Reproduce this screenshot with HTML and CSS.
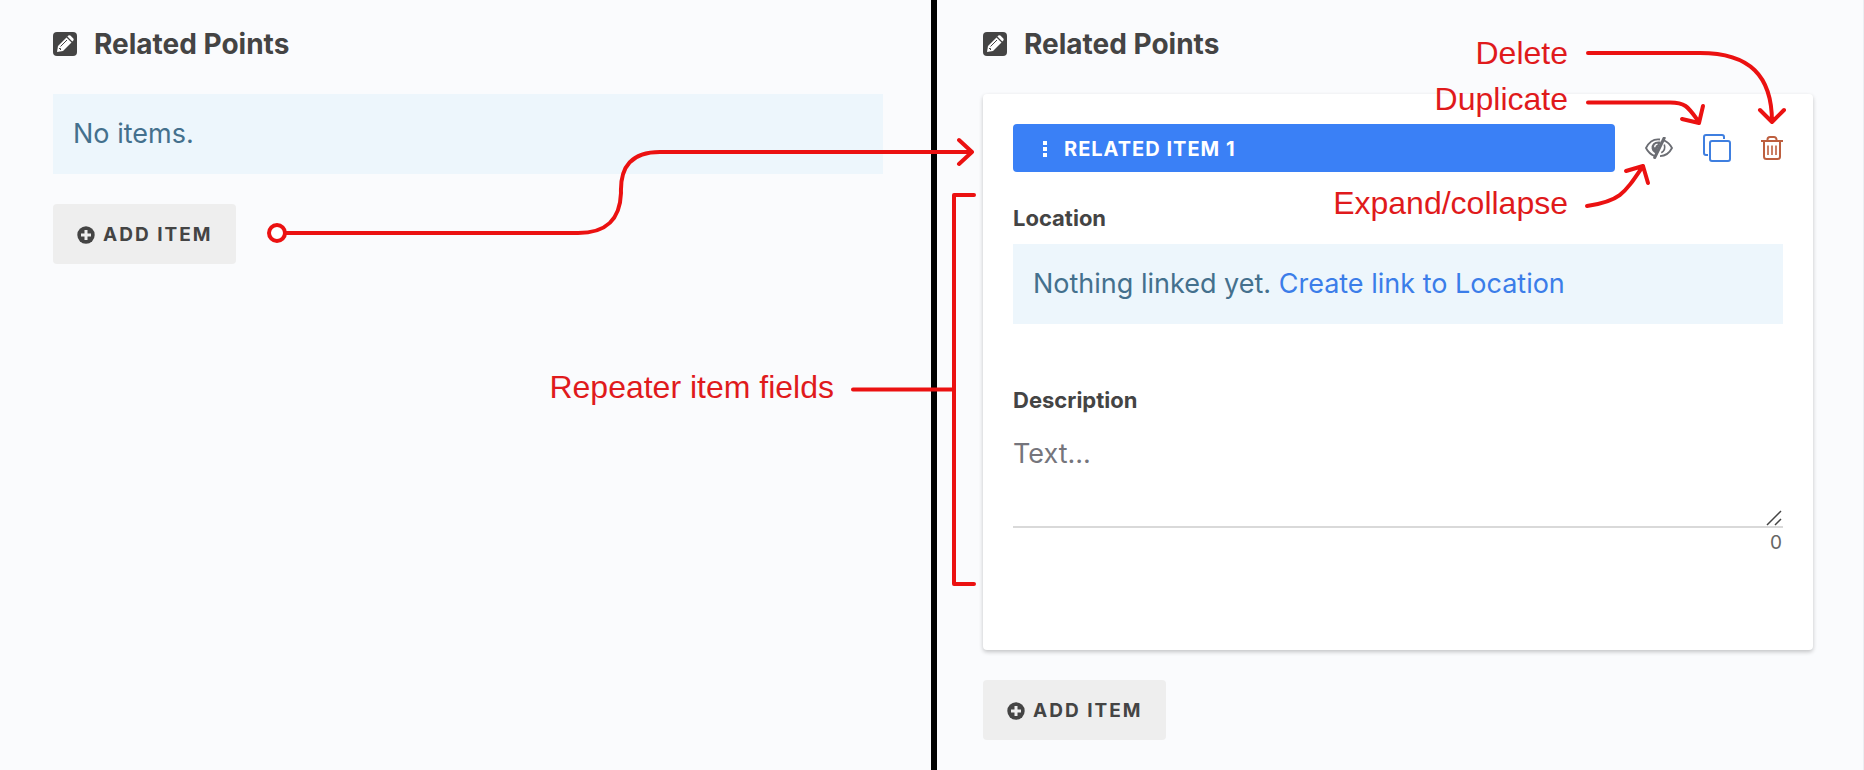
FILE: index.html
```
<!DOCTYPE html>
<html lang="en">
<head>
<meta charset="utf-8">
<title>Related Points</title>
<link rel="stylesheet" href="styles.css">
</head>
<body>
<svg class="symbols" aria-hidden="true">
  <symbol id="pencil" viewBox="0 0 24 24">
    <rect width="24" height="24" rx="4" fill="#444"/>
    <path d="M4 20l1-6 8.500-8.500 5 5L10 19z" fill="#fff"/>
    <path d="M14.400 4.600l1-1a1.500 1.500 0 0 1 2 0l2.900 2.900a1.500 1.500 0 0 1 0 2l-1 1z" fill="#fff"/>
    <path d="M7.500 14.500l6.500-6.500M6 16.500h1.500V18" fill="none" stroke="#444" stroke-width="1"/>
  </symbol>
  <symbol id="plus" viewBox="0 0 18 18">
    <circle cx="9" cy="9" r="8.700" fill="#444"/>
    <path d="M9 4v10M4 9h10" stroke="#eee" stroke-width="3"/>
  </symbol>
</svg>
<main class="compare">
  <section class="pane pane-before">
    <h2 class="heading"><svg class="heading-icon"><use href="#pencil"/></svg>Related Points</h2>
    <p class="notice">No items.</p>
    <button class="add" type="button"><svg class="add-icon"><use href="#plus"/></svg>ADD ITEM</button>
  </section>
  <section class="pane pane-after">
    <h2 class="heading"><svg class="heading-icon"><use href="#pencil"/></svg>Related Points</h2>
    <div class="card">
      <div class="item-bar">
        <button class="item-title" type="button">
          <svg class="grip" viewBox="0 0 6 18"><path d="M1 1h4v4H1zM1 7h4v4H1zM1 13h4v4H1z" fill="#fff"/></svg>RELATED ITEM 1
        </button>
        <div class="tools">
          <button class="tool" type="button" aria-label="Expand or collapse">
            <svg width="28" height="22" viewBox="0 0 28 22" fill="none" stroke="#6b6d73" stroke-width="1.800">
              <path d="M15 2.500C8 1.500 3.500 6 1 11c2 4 5 6.500 8.500 8"/>
              <path d="M19 3.300c3.500 1.500 6.200 4.200 8 7.700-2.800 5.500-7 8-12 8.200"/>
              <path d="M14.500 5.500C9 5 7 8.500 7.500 11.500c.3 1.800 1.300 3 2.700 3.800z" fill="#6b6d73"/>
              <path d="M12.500 7.200c-2 .3-2.800 1.500-2.800 3.100" stroke="#fff" stroke-width="1.300"/>
              <path d="M19.300 7.500c1.200 4-.3 6.700-3 8.200" stroke-width="1.600"/>
              <path d="M19.200 1L9.700 20.500" stroke-width="3" stroke-linecap="round"/>
            </svg>
          </button>
          <button class="tool" type="button" aria-label="Duplicate">
            <svg width="28" height="28" viewBox="0 0 28 28" fill="none" stroke="#3f7fe0" stroke-width="2">
              <path d="M21 5V3a2 2 0 0 0-2-2H3a2 2 0 0 0-2 2v16a2 2 0 0 0 2 2h2"/>
              <rect x="7" y="7" width="20" height="20" rx="2"/>
            </svg>
          </button>
          <button class="tool" type="button" aria-label="Delete">
            <svg width="22" height="24" viewBox="0 0 22 24" fill="none" stroke="#bd5f3f" stroke-width="2">
              <path d="M0 5h22M6.500 5V3.500a2.500 2.500 0 0 1 2.500-2.500h4a2.500 2.500 0 0 1 2.500 2.500V5M3 5v15.500A2.500 2.500 0 0 0 5.500 23h11a2.500 2.500 0 0 0 2.500-2.500V5"/>
              <path d="M7 9.500v9.500M11 9.500v9.500M15 9.500v9.500" stroke-width="1.600"/>
            </svg>
          </button>
        </div>
      </div>
      <h3 class="label">Location</h3>
      <p class="notice">Nothing linked yet. <a class="link" href="#location">Create link to Location</a></p>
      <label class="label label-description" for="description">Description</label>
      <div class="field">
        <textarea class="text" id="description" placeholder="Text..."></textarea>
        <svg class="resizer" viewBox="0 0 16 16"><path d="M1 15L15 1M9 15l6-6" stroke="#444" stroke-width="1.500"/></svg>
      </div>
      <output class="count" for="description">0</output>
    </div>
    <button class="add" type="button"><svg class="add-icon"><use href="#plus"/></svg>ADD ITEM</button>
  </section>
  <svg class="notes" viewBox="0 0 1864 770">
    <g class="note-lines">
      <circle cx="277" cy="233" r="8" fill="#fff"/>
      <path d="M286 233H578C606 233 620 220 621 193C620 166 632 152 660 152H972M959 140l13 12l-13 12"/>
      <path d="M974 195H954V584H974M853 389.500H954"/>
      <path d="M1588 53H1700C1750 53 1772 76 1772 122M1760 110l12 12l12-12"/>
      <path d="M1588 102.500H1670C1686 102.500 1688 107 1699 122M1682 119l17 4l4-17"/>
      <path d="M1587 206C1620 201 1624 194 1643 166M1626 171l17-5l5 17"/>
    </g>
    <g class="note-text">
      <text x="1568" y="64">Delete</text>
      <text x="1568" y="110">Duplicate</text>
      <text x="1568" y="214">Expand/collapse</text>
      <text x="834" y="398">Repeater item fields</text>
    </g>
  </svg>
</main>
</body>
</html>
```
FILE: styles.css
```
* { box-sizing: border-box; }
body {
  margin: 0;
  background: #fafbfd;
  color: #444;
  font-family: Inter, "Liberation Sans", sans-serif;
  font-size: 27px;
  line-height: 40px;
}
button, textarea { font: inherit; color: inherit; border: 0; margin: 0; }
button { cursor: pointer; }
.symbols { position: absolute; width: 0; height: 0; }
.compare { position: relative; display: flex; min-height: 100vh; }
.pane { flex: 1 1 0; padding-top: 24px; padding-bottom: 30px; }
.pane-before { padding-left: 53px; padding-right: 48px; }
.pane-after {
  padding-left: 46px;
  padding-right: 50px;
  border-left: 6px solid #000;
  border-right: 1px solid #eceef2;
}
.heading {
  display: flex;
  align-items: center;
  gap: 17px;
  margin: 0 0 30px;
  font-size: 28px;
  font-weight: 700;
}
.heading-icon { width: 24px; height: 24px; }
.notice { margin: 0; padding: 20px; background: #edf6fc; color: #44708d; }
.link { color: #3b7de9; text-decoration: none; }
.add {
  display: flex;
  align-items: center;
  gap: 8px;
  height: 60px;
  margin-top: 30px;
  padding: 2px 24px 0;
  border-radius: 4px;
  background: #eee;
  font-size: 19px;
  font-weight: 700;
  letter-spacing: 2px;
}
.add-icon { width: 18px; height: 18px; }
.card {
  padding: 30px 30px 95px;
  border-radius: 4px;
  background: #fff;
  box-shadow: 0 2px 4px rgba(0, 0, 0, .22);
}
.item-bar { display: flex; gap: 30px; }
.item-title {
  flex: 1;
  display: flex;
  align-items: center;
  gap: 16px;
  height: 48px;
  padding: 2px 29px 0;
  border-radius: 4px;
  background: #3a80f6;
  color: #fff;
  font-size: 20px;
  font-weight: 700;
  letter-spacing: 1px;
}
.grip { width: 6px; height: 18px; }
.tools { display: flex; align-items: center; gap: 30px; }
.tool { display: flex; padding: 0; background: none; }
.label {
  display: block;
  margin: 32px 0 12px;
  font-size: 22px;
  line-height: 28px;
  font-weight: 700;
}
.label-description { margin: 62px 0 20px; }
.field { position: relative; }
.text {
  display: block;
  width: 100%;
  height: 94px;
  padding: 0;
  border-bottom: 2px solid #d9d9d9;
  background: none;
  resize: none;
}
.text::placeholder { color: #75757c; opacity: 1; }
.resizer { position: absolute; right: 1px; bottom: 2px; width: 16px; height: 16px; }
.count {
  display: block;
  padding: 3px 1px 0;
  font-size: 19px;
  line-height: 24px;
  color: #666;
  text-align: right;
}
.notes { position: absolute; top: 0; left: 0; width: 100%; pointer-events: none; }
.note-lines { fill: none; stroke: #eb1111; stroke-width: 4; stroke-linecap: round; stroke-linejoin: round; }
.note-text { fill: #e01a1c; font-family: "Liberation Sans", Arial, sans-serif; font-size: 32px; text-anchor: end; }
```
